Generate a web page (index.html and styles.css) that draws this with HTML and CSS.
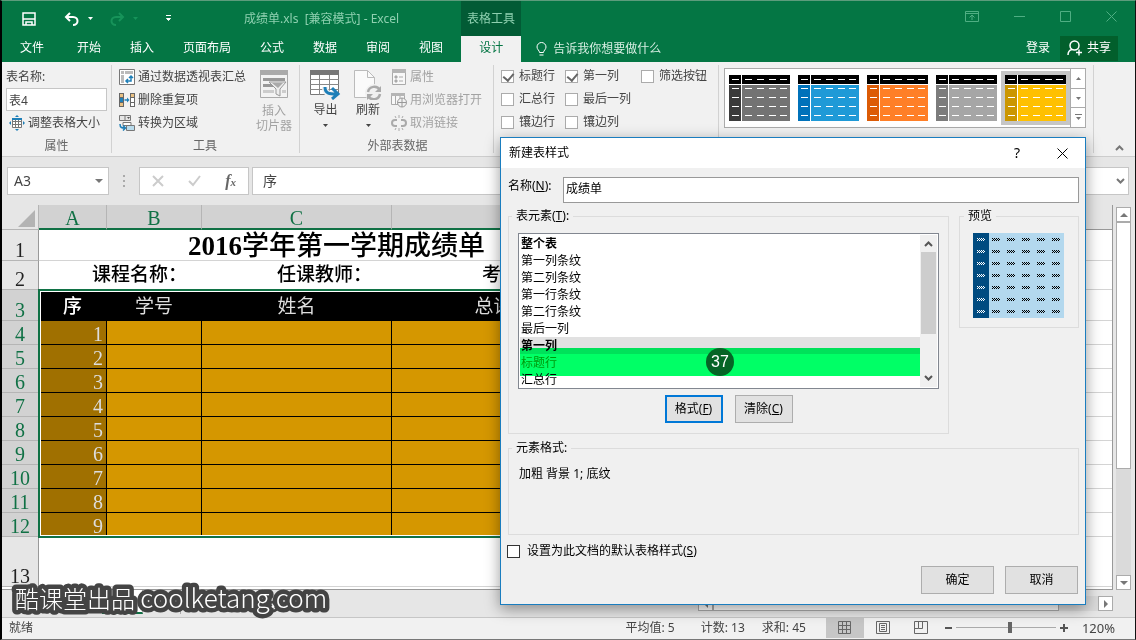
FILE: index.html
```html
<!DOCTYPE html>
<html lang="zh-CN">
<head>
	<meta charset="UTF-8">
	<meta name="viewport" content="width=device-width, initial-scale=1.0">
	<title>成绩单.xls [兼容模式] - Excel</title>
	<link rel="stylesheet" href="styles.css">
</head>

<body>
	<!-- shared shapes -->
	<svg class="defs" width="0" height="0" aria-hidden="true">
		<symbol id="swatch" viewBox="0 0 61 46">
			<rect width="61" height="46" fill="#fff"/>
			<rect width="12" height="9"/>
			<rect x="13" width="48" height="9"/>
			<rect class="side" y="10" width="12" height="36"/>
			<rect x="13" y="10" width="48" height="36" fill="currentColor"/>
			<path d="M3 4.500h7M16 4.500h7M28 4.500h7M40 4.500h7M51 4.500h7M3 13.500h7M16 13.500h7M28 13.500h7M40 13.500h7M51 13.500h7M3 22.500h7M16 22.500h7M28 22.500h7M40 22.500h7M51 22.500h7M3 31.500h7M16 31.500h7M28 31.500h7M40 31.500h7M51 31.500h7M3 40.500h7M16 40.500h7M28 40.500h7M40 40.500h7M51 40.500h7" stroke="#fff"/>
		</symbol>
		<symbol id="down" viewBox="0 0 5 3"><path d="M0 0h5L2.500 3z" fill="currentColor"/></symbol>
		<symbol id="chevron" viewBox="0 0 9 6"><path d="M1 5l3.500-3.500L8 5" fill="none" stroke="currentColor" stroke-width="2"/></symbol>
	</svg>

	<header class="titlebar">
		<div class="quick">
			<button class="plain" aria-label="保存"><svg width="14" height="14"><path d="M1 1h12v12H1zM1 7h12M4 13v-3h6v3" fill="none" stroke="#fff" stroke-width="1.500"/></svg></button>
			<button class="plain undo" aria-label="撤消"><svg width="16" height="14"><path d="M6 1L2 5l4 4M2 5h7c6 0 6 8 0 8" fill="none" stroke="#fff" stroke-width="2"/></svg></button>
			<svg class="arrow" width="5" height="3"><use href="#down"/></svg>
			<button class="plain redo" aria-label="恢复"><svg width="16" height="14"><path d="M10 1l4 4-4 4M14 5H7c-6 0-6 8 0 8" fill="none" stroke="#17935a" stroke-width="2"/></svg></button>
			<svg class="arrow dim" width="5" height="3"><use href="#down"/></svg>
			<svg class="customize" width="7" height="7"><path d="M1 .500h5M1.500 3.500h4L3.500 5.500z" stroke="#fff" fill="#fff"/></svg>
			<span class="doc">成绩单.xls&nbsp; [兼容模式] - Excel</span>
		</div>
		<div class="context">表格工具</div>
		<div class="window-buttons">
			<button class="plain" aria-label="功能区显示选项"><svg width="14" height="11"><path d="M.500.500h13v10H.500zM.500 2.500h13M7 9V4.500M4.500 6.500L7 4l2.500 2.500" fill="none" stroke="#4fae83"/></svg></button>
			<button class="plain" aria-label="最小化"><svg width="11" height="11"><path d="M0 5.500h11" stroke="#4fae83"/></svg></button>
			<button class="plain" aria-label="最大化"><svg width="11" height="11"><path d="M.500.500h10v10H.500z" fill="none" stroke="#4fae83"/></svg></button>
			<button class="plain" aria-label="关闭"><svg width="11" height="11"><path d="M.500.500l10 10M10.500.500l-10 10" stroke="#4fae83"/></svg></button>
		</div>
	</header>

	<nav class="tabs">
		<a class="file" href="#">文件</a>
		<a href="#">开始</a>
		<a href="#">插入</a>
		<a href="#">页面布局</a>
		<a href="#">公式</a>
		<a href="#">数据</a>
		<a href="#">审阅</a>
		<a href="#">视图</a>
		<a class="active" href="#">设计</a>
		<a class="tell" href="#"><svg width="11" height="14"><path d="M3.500 10.500c0-2-2.500-3-2.500-5.500a4.500 4.500 0 0 1 9 0c0 2.500-2.500 3.500-2.500 5.500zM3.500 13h4" fill="none" stroke="#fff"/></svg>告诉我你想要做什么</a>
		<a class="login" href="#">登录</a>
		<button class="share"><svg width="16" height="16"><circle cx="7.500" cy="5.500" r="4.500" fill="none" stroke="#fff" stroke-width="1.500"/><path d="M1 15c0-3 2-5 4-5.500M9 12.500h6M12 9.500v6" fill="none" stroke="#fff" stroke-width="1.500"/></svg>共享</button>
	</nav>

	<section class="ribbon">
		<div class="group props">
			<label class="row" for="tname">表名称:</label>
			<div class="row"><input id="tname" class="tname" value="表4"></div>
			<button class="row cmd"><svg width="16" height="16"><path d="M3.500 3.500h9v9h-9zM3.500 6.500h9M3.500 9.500h9M6.500 3.500v9M9.500 3.500v9" fill="#fff" stroke="#777"/><path d="M3 3h10v2H3zM8 0l2 2H6zM8 16l2-2H6zM0 8l2-2v4zM16 8l-2-2v4z" fill="#1e7fb8"/></svg>调整表格大小</button>
			<h2>属性</h2>
		</div>

		<div class="group tools">
			<div class="cols">
				<div>
					<button class="row cmd"><svg width="16" height="16"><path d="M.500.500h15v15H.500z" fill="#fff" stroke="#777"/><path d="M2 2h3v3H2zM6 2h8v3H6zM2 6h3v8H2z" fill="#bbb"/><path d="M7 12h5V7M9 10l-2 2 2 2M10 9l2-2 2 2" fill="none" stroke="#1e7fb8" stroke-width="1.500"/></svg>通过数据透视表汇总</button>
					<button class="row cmd"><svg width="16" height="14"><path d="M0 0h5v14H0zM11 0h5v14h-5z" fill="#666"/><path d="M1 1h3v3H1zM1 10h3v3H1zM12 1h3v3h-3z" fill="#e8c083"/><path d="M1 5h3v4H1z" fill="#1e7fb8"/><path d="M12 5h3v4h-3zM12 10h3v3h-3z" fill="#fff"/><path d="M5.500 7H9" stroke="#1e7fb8" stroke-width="1.500"/><path d="M8 4.500L10.500 7 8 9.500z" fill="#1e7fb8"/></svg>删除重复项</button>
					<button class="row cmd"><svg width="16" height="16"><path d="M.500.500h11v5H.500zM6 .500v5" fill="#e5e5e5" stroke="#777"/><path d="M8 2h3L9.500 4z" fill="#555"/><path d="M7.500 10.500h8v5h-8z" fill="#b9dced" stroke="#777"/><path d="M4 7.500h8v3H4z" fill="#fff" stroke="#777"/><path d="M1 9c0 4 2 4 5 4M4 10.500L6.500 13 4 15.500" fill="none" stroke="#1e7fb8" stroke-width="1.500"/></svg>转换为区域</button>
				</div>
				<button class="big off"><svg width="28" height="28"><path d="M.500.500h27v27H.500z" fill="#f3f3f3" stroke="#aaa"/><path d="M0 0h28v5H0z" fill="#aaa"/><path d="M3 8h22v3H3zM3 14h11v3H3z" fill="#999"/><path d="M3 20h11v3H3zM22 20h4v3h-4z" fill="#ccc"/><path d="M9 12h17l-6 7v7l-4-2v-5z" fill="#eee" stroke="#999"/><path d="M12 13h11l-5 5z" fill="#aaa"/></svg><span>插入<br>切片器</span></button>
			</div>
			<h2>工具</h2>
		</div>

		<div class="group external">
			<div class="cols">
				<button class="big"><svg width="31" height="30"><path d="M.500.500h28v24H.500z" fill="#fff" stroke="#777"/><path d="M0 0h29v5H0z" fill="#777"/><path d="M0 9.500h29M0 14.500h29M0 19.500h29M9.500 5v20M19.500 5v20" stroke="#888"/><path d="M15 17c0 7 4 7 10 7" fill="none" stroke="#f1f1f1" stroke-width="6"/><path d="M15 17c0 7 5 7 11 7M22 18l6 6-6 5" fill="none" stroke="#1e7fb8" stroke-width="3"/></svg><span>导出</span><svg width="5" height="3"><use href="#down"/></svg></button>
				<button class="big refresh"><svg width="28" height="30"><path d="M.500.500h13l7 7v20H.500z" fill="#fafafa" stroke="#bbb"/><path d="M13.500.500v7h7" fill="none" stroke="#bbb"/><circle cx="20" cy="23" r="9" fill="#f1f1f1"/><path d="M14 22c1-6 9-7 12-2M26 24c-1 6-9 7-12 2" fill="none" stroke="#aaa" stroke-width="2.500"/><path d="M27 16v6h-6zM13 30v-6h6z" fill="#aaa"/></svg><span>刷新</span><svg width="5" height="3"><use href="#down"/></svg></button>
				<div>
					<button class="row cmd off"><svg width="16" height="16"><path d="M1.500 1.500h13v14h-13z" fill="#f8f8f8" stroke="#aaa"/><path d="M1 0h14v4H1z" fill="#b5b5b5"/><path d="M4 7h2v2H4zM4 11h2v2H4zM8 8h4M8 12h4" fill="#aaa" stroke="#aaa"/></svg>属性</button>
					<button class="row cmd off"><svg width="16" height="16"><path d="M.500 1.500h13v11H.500zM4.500 4v8M9 4v3" fill="#f8f8f8" stroke="#aaa"/><path d="M0 1h14v3H0z" fill="#b5b5b5"/><circle cx="11" cy="10.500" r="4.500" fill="#f1f1f1" stroke="#999"/><path d="M6.500 10.500h9M11 6v9" stroke="#999"/></svg>用浏览器打开</button>
					<button class="row cmd off"><svg width="16" height="16"><path d="M6 5H4a3 3 0 0 0 0 6h2M10 5h2a3 3 0 0 1 0 6h-2" fill="none" stroke="#aaa" stroke-width="2"/><path d="M8 0v3M4 1l1 2M12 1l-1 2M8 16v-3M4 15l1-2M12 15l-1-2" stroke="#aaa"/></svg>取消链接</button>
				</div>
			</div>
			<h2>外部表数据</h2>
		</div>

		<div class="group options">
			<label><input type="checkbox" checked>标题行</label>
			<label><input type="checkbox" checked>第一列</label>
			<label><input type="checkbox">筛选按钮</label>
			<label><input type="checkbox">汇总行</label>
			<label class="wide"><input type="checkbox">最后一列</label>
			<label><input type="checkbox">镶边行</label>
			<label class="wide"><input type="checkbox">镶边列</label>
		</div>

		<div class="group styles">
			<div class="gallery">
				<button class="tile grey" aria-label="深灰"><svg width="61" height="46"><use href="#swatch"/></svg></button>
				<button class="tile blue" aria-label="蓝色"><svg width="61" height="46"><use href="#swatch"/></svg></button>
				<button class="tile orange" aria-label="橙色"><svg width="61" height="46"><use href="#swatch"/></svg></button>
				<button class="tile silver" aria-label="浅灰"><svg width="61" height="46"><use href="#swatch"/></svg></button>
				<button class="tile gold chosen" aria-label="金色"><svg width="61" height="46"><use href="#swatch"/></svg></button>
				<div class="gallery-scroll">
					<button aria-label="上一行"><svg class="flip" width="5" height="3"><use href="#down"/></svg></button>
					<button aria-label="下一行"><svg width="5" height="3"><use href="#down"/></svg></button>
					<button aria-label="其他"><svg width="7" height="7"><path d="M0 .500h7" stroke="#777"/><path d="M1 3h5L3.500 6z" fill="#777"/></svg></button>
				</div>
			</div>
		</div>
		<button class="collapse" aria-label="折叠功能区"><svg width="9" height="6"><use href="#chevron"/></svg></button>
	</section>

	<section class="formula">
		<div class="namebox"><span>A3</span><svg width="8" height="4" viewBox="0 0 5 3" preserveAspectRatio="none"><path d="M0 0h5L2.500 3z" fill="#777"/></svg></div>
		<svg class="grip" width="2" height="12"><path d="M0 1h2M0 6h2M0 11h2" stroke="#aaa" stroke-width="2"/></svg>
		<div class="fx">
			<svg width="12" height="12"><path d="M1 1l10 10M11 1L1 11" stroke="#ccc" stroke-width="2"/></svg>
			<svg width="13" height="12"><path d="M1 6l4 4 7-9" fill="none" stroke="#ccc" stroke-width="2"/></svg>
			<i>f<small>x</small></i>
		</div>
		<div class="bar"><input aria-label="编辑栏" value="序"><svg class="flip" width="9" height="6"><use href="#chevron"/></svg></div>
	</section>

	<main class="book">
		<div class="sheet">
			<table>
				<colgroup><col class="c-head"><col class="c-a"><col class="c-b"><col class="c-c"><col class="c-d"><col></colgroup>
				<thead>
					<tr><th class="corner"><svg width="17" height="17"><path d="M17 0v17H0z" fill="#b3b3b3"/></svg></th><th>A</th><th>B</th><th>C</th><th>D</th><th class="rest"></th></tr>
				</thead>
				<tbody>
					<tr class="r1"><th>1</th><td colspan="4" class="heading"><b>2016</b>学年第一学期成绩单</td><td></td></tr>
					<tr class="r2"><th>2</th><td colspan="4"><div class="info"><span>课程名称：</span><span>任课教师：</span><span>考试时间：</span></div></td><td></td></tr>
					<tr class="r3 sel"><th>3</th><td class="first">序</td><td>学号</td><td>姓名</td><td>总评成绩</td><td class="out"></td></tr>
					<tr class="sel"><th>4</th><td>1</td><td></td><td></td><td></td><td class="out"></td></tr>
					<tr class="sel"><th>5</th><td>2</td><td></td><td></td><td></td><td class="out"></td></tr>
					<tr class="sel"><th>6</th><td>3</td><td></td><td></td><td></td><td class="out"></td></tr>
					<tr class="sel"><th>7</th><td>4</td><td></td><td></td><td></td><td class="out"></td></tr>
					<tr class="sel"><th>8</th><td>5</td><td></td><td></td><td></td><td class="out"></td></tr>
					<tr class="sel"><th>9</th><td>6</td><td></td><td></td><td></td><td class="out"></td></tr>
					<tr class="sel"><th>10</th><td>7</td><td></td><td></td><td></td><td class="out"></td></tr>
					<tr class="sel"><th>11</th><td>8</td><td></td><td></td><td></td><td class="out"></td></tr>
					<tr class="sel"><th>12</th><td>9</td><td></td><td></td><td></td><td class="out"></td></tr>
					<tr class="r13"><th>13</th><td colspan="4"></td><td></td></tr>
				</tbody>
			</table>
			<div class="selection"></div>
		</div>
		<div class="vscroll">
			<button aria-label="向上"><svg class="flip" width="8" height="4" viewBox="0 0 5 3" preserveAspectRatio="none"><path d="M0 0h5L2.500 3z" fill="#777"/></svg></button>
			<div class="thumb"></div>
			<button aria-label="向下"><svg width="8" height="4" viewBox="0 0 5 3" preserveAspectRatio="none"><path d="M0 0h5L2.500 3z" fill="#777"/></svg></button>
		</div>
	</main>

	<div class="sheets">
		<a class="current" href="#">1#</a>
		<a href="#">2#</a>
		<div class="hscroll">
			<button aria-label="向左"><svg width="4" height="8"><path d="M4 0v8L0 4z" fill="#777"/></svg></button>
			<div class="thumb"></div>
			<button class="right" aria-label="向右"><svg width="4" height="8"><path d="M0 0v8l4-4z" fill="#777"/></svg></button>
		</div>
	</div>

	<footer class="status">
		<span class="ready">就绪</span>
		<span class="average">平均值: 5</span>
		<span class="count">计数: 13</span>
		<span>求和: 45</span>
		<div class="views">
			<button class="on" aria-label="普通"><svg width="13" height="13"><path d="M.500.500h12v12H.500zM.500 4.500h12M.500 8.500h12M4.500.500v12M8.500.500v12" fill="none" stroke="#666"/></svg></button>
			<button aria-label="页面布局"><svg width="14" height="13"><path d="M.500.500h13v12H.500zM3.500 2.500h7v8h-7zM5 4.500h4M5 6.500h4M5 8.500h4" fill="none" stroke="#666"/></svg></button>
			<button aria-label="分页预览"><svg width="14" height="13"><path d="M.500.500h13v12H.500zM4.500.500v7h-4M8.500.500v7h-4" fill="none" stroke="#666"/></svg></button>
		</div>
		<div class="zoom">
			<button class="plain" aria-label="缩小"><svg width="7" height="8"><path d="M0 4h7" stroke="#555" stroke-width="2"/></svg></button>
			<input type="range" min="0" max="100" value="54" aria-label="显示比例">
			<button class="plain" aria-label="放大"><svg width="8" height="8"><path d="M0 4h8M4 0v8" stroke="#555" stroke-width="2"/></svg></button>
			<span>120%</span>
		</div>
	</footer>

	<div class="dialog" role="dialog" aria-labelledby="dlg-title">
		<div class="dialog-title">
			<span id="dlg-title">新建表样式</span>
			<button class="plain help" aria-label="帮助">?</button>
			<button class="plain" aria-label="关闭"><svg width="11" height="11"><path d="M.500.500l10 10M10.500.500l-10 10" stroke="#000"/></svg></button>
		</div>
		<form class="dialog-body">
			<div class="name-row">
				<label for="style-name">名称(<u>N</u>):</label>
				<input id="style-name" value="成绩单">
			</div>
			<div class="panels">
				<fieldset class="elements">
					<legend>表元素(<u>T</u>):</legend>
					<div class="listbox">
						<ul role="listbox">
							<li class="set">整个表</li>
							<li>第一列条纹</li>
							<li>第二列条纹</li>
							<li>第一行条纹</li>
							<li>第二行条纹</li>
							<li>最后一列</li>
							<li class="set picked">第一列</li>
							<li class="target">标题行</li>
							<li>汇总行</li>
						</ul>
						<div class="list-scroll">
							<svg width="9" height="6"><use href="#chevron"/></svg>
							<div class="thumb"></div>
							<svg class="flip" width="9" height="6"><use href="#chevron"/></svg>
						</div>
						<div class="highlight"></div>
						<div class="counter">37</div>
					</div>
					<div class="actions">
						<button type="button" class="btn focus">格式(<u>F</u>)</button>
						<button type="button" class="btn">清除(<u>C</u>)</button>
					</div>
				</fieldset>
				<fieldset class="preview">
					<legend>预览</legend>
					<svg width="91" height="85">
						<defs>
							<!-- one row of cells, each cell a small hatched dash -->
							<g id="dash" stroke-dasharray="1 1">
								<path d="M0 .500h8M1 1.500h8M0 2.500h8"/>
							</g>
							<g id="cells">
								<use href="#dash" x="4" y="5" stroke="#fff"/>
								<g stroke="#000">
									<use href="#dash" x="19" y="5"/>
									<use href="#dash" x="34" y="5"/>
									<use href="#dash" x="49" y="5"/>
									<use href="#dash" x="64" y="5"/>
									<use href="#dash" x="79" y="5"/>
								</g>
							</g>
						</defs>
						<rect width="16" height="85" fill="#004b80"/>
						<rect x="16" width="75" height="85" fill="#b3d8ee"/>
						<use href="#cells"/>
						<use href="#cells" y="12"/>
						<use href="#cells" y="24"/>
						<use href="#cells" y="36"/>
						<use href="#cells" y="48"/>
						<use href="#cells" y="60"/>
						<use href="#cells" y="72"/>
					</svg>
				</fieldset>
			</div>
			<fieldset class="format">
				<legend>元素格式:</legend>
				<p>加粗 背景 1; 底纹</p>
			</fieldset>
			<label class="default"><input type="checkbox"><span>设置为此文档的默认表格样式(<u>S</u>)</span></label>
			<div class="confirm">
				<button type="button" class="btn">确定</button>
				<button type="button" class="btn">取消</button>
			</div>
		</form>
	</div>

	<svg class="watermark" width="350" height="50">
		<text x="13" y="32">酷课堂出品 <tspan class="site">coolketang.com</tspan></text>
	</svg>
</body>
</html>
```
FILE: styles.css
```css
* {
  box-sizing: border-box;
}

body {
  position: relative;
  display: flex;
  flex-direction: column;
  min-height: 100vh;
  margin: 0;
  border: 1px solid #5c9c7c;
  border-left: 2px solid #000;
  border-right-color: #111;
  border-bottom-color: #777;
  background-color: #e6e6e6;
  color: #444;
  font: 12px/16px "Noto Sans", "Noto Sans CJK SC", sans-serif;
  overflow: hidden;
}

button,
input {
  font: inherit;
  color: inherit;
}

button {
  display: flex;
  align-items: center;
  justify-content: center;
  margin: 0;
  padding: 0;
  border: 0;
  background: none;
  white-space: nowrap;
}

svg {
  display: block;
  flex: none;
}

a {
  color: inherit;
  text-decoration: none;
}

.defs {
  position: absolute;
}

.flip {
  transform: scaleY(-1);
}

/* title bar */

.titlebar {
  display: flex;
  height: 35px;
  background-color: #047644;
  color: #8fd0b0;
}

.quick {
  display: flex;
  align-items: center;
  width: 459px;
  padding-left: 20px;
  color: #fff;
}

.undo {
  margin-left: 28px;
}

.arrow {
  margin-left: 8px;
}

.redo {
  margin-left: 16px;
}

.dim {
  color: #17935a;
}

.customize {
  margin-left: 27px;
}

.doc {
  margin-left: 72px;
  color: #8fd0b0;
  white-space: nowrap;
}

.context {
  width: 60px;
  line-height: 35px;
  background-color: #025b35;
  text-align: center;
}

.window-buttons {
  display: flex;
  gap: 35px;
  align-items: center;
  margin-left: auto;
  padding: 0 18px 4px 0;
}

/* ribbon tabs */

.tabs {
  display: flex;
  gap: 1px;
  height: 26px;
  background-color: #047644;
  color: #fff;
  line-height: 24px;
}

.tabs a {
  padding: 0 14px;
  white-space: nowrap;
}

.tabs .file {
  padding: 0 18px;
}

.tabs .active {
  margin-left: 3px;
  padding: 0 18px;
  background-color: #f1f1f1;
  color: #047644;
}

.tabs .tell {
  display: flex;
  align-items: center;
  gap: 6px;
  color: #d5ede1;
}

.tabs .login {
  margin-left: auto;
  padding: 0 9px;
}

.share {
  gap: 4px;
  width: 58px;
  height: 25px;
  margin-right: 17px;
  padding-bottom: 2px;
  background-color: #025f2c;
}

/* ribbon */

.ribbon {
  display: flex;
  height: 95px;
  padding-top: 3px;
  border-bottom: 1px solid #cdcdcd;
  background-color: #f1f1f1;
}

.group {
  position: relative;
  height: 88px;
  border-right: 1px solid #d2d2d2;
}

.group h2 {
  margin: 0;
  font-size: 12px;
  font-weight: normal;
  line-height: 24px;
  text-align: center;
  color: #666;
}

.row {
  display: flex;
  align-items: center;
  height: 23px;
}

.cmd {
  justify-content: flex-start;
  gap: 3px;
}

.off {
  color: #a3a3a3;
}

.cols {
  display: flex;
}

.props {
  width: 110px;
  padding: 0 4px;
}

.props .cmd {
  padding-left: 3px;
}

.tname {
  width: 101px;
  height: 23px;
  padding: 0 2px;
  border: 1px solid #c6c6c6;
  background-color: #fff;
}

.tools {
  width: 188px;
  padding-left: 7px;
}

.tools h2,
.external h2 {
  padding-right: 8px;
}

.big {
  flex-direction: column;
  justify-content: flex-start;
  gap: 5px;
  height: 69px;
  padding-top: 5px;
  line-height: 15px;
}

.tools .big {
  margin-left: 10px;
}

.external {
  width: 194px;
  padding-left: 10px;
}

.external .big {
  gap: 2px;
}

.external .big span {
  margin-bottom: 5px;
}

.refresh {
  margin-left: 13px;
}

.external .cols > div {
  margin-left: 9px;
}

.options {
  display: grid;
  grid-template-columns: 64px 76px 1fr;
  grid-template-rows: repeat(3, 23px);
  width: 225px;
  padding-left: 7px;
}

.options label {
  display: flex;
  align-items: center;
  gap: 5px;
  padding-bottom: 1px;
  white-space: nowrap;
}

.options .wide {
  grid-column: 2 / 4;
}

input[type="checkbox"] {
  flex: none;
  appearance: none;
  width: 13px;
  height: 13px;
  margin: 0;
  border: 1px solid #ababab;
  background-color: #fff;
}

input[type="checkbox"]:checked::after {
  content: "";
  display: block;
  width: 5px;
  height: 8px;
  margin: 0 0 0 3px;
  border: solid #666;
  border-width: 0 2px 2px 0;
  transform: rotate(40deg);
}

.styles {
  width: 375px;
  padding: 3px 0 0 5px;
}

.gallery {
  display: flex;
  width: 362px;
  height: 60px;
  border: 1px solid #ababab;
  background-color: #fff;
}

.tile {
  width: 69px;
  height: 54px;
  margin-top: 2px;
}

.side {
  fill: var(--side);
}

.chosen {
  background-color: #c6c6c6;
}

.grey { color: #737373; --side: #3b3b3b; }
.blue { color: #1f9ad7; --side: #0072ba; }
.orange { color: #ff7f27; --side: #dc5b06; }
.silver { color: #a6a6a6; --side: #7c7c7c; }
.gold { color: #ffc000; --side: #cb9600; }

.gallery-scroll {
  display: flex;
  flex: 1;
  flex-direction: column;
  border-left: 1px solid #ababab;
  color: #777;
}

.gallery-scroll button {
  flex: 1;
}

.gallery-scroll button + button {
  border-top: 1px solid #ababab;
}

.collapse {
  align-self: flex-end;
  margin: 0 11px 5px auto;
  color: #777;
}

/* formula bar */

.formula {
  display: flex;
  align-items: center;
  height: 48px;
  padding: 0 6px 0 5px;
}

.namebox,
.fx,
.bar {
  display: flex;
  align-items: center;
  height: 28px;
  border: 1px solid #c6c6c6;
  background-color: #fff;
}

.namebox {
  justify-content: space-between;
  width: 102px;
  padding: 0 5px 0 6px;
  font-size: 14px;
}

.grip {
  margin: 0 14px;
}

.fx {
  justify-content: space-between;
  width: 110px;
  padding: 0 12px;
}

.fx i {
  color: #666;
  font: bold italic 16px/20px "Liberation Serif", serif;
}

.fx small {
  font-size: 11px;
}

.bar {
  flex: 1;
  margin-left: 3px;
  padding-right: 3px;
  color: #777;
}

.bar input {
  flex: 1;
  min-width: 0;
  padding: 0 10px;
  border: 0;
  background: none;
  color: #444;
  font-size: 14px;
}

/* worksheet */

.book {
  display: flex;
  gap: 3px;
  flex: 1;
  padding-right: 4px;
}

.sheet {
  position: relative;
  flex: 1;
  min-width: 0;
  border-right: 1px solid #999;
  border-bottom: 1px solid #999;
  background-color: #fff;
}

.sheet table {
  width: 100%;
  table-layout: fixed;
  border-collapse: separate;
  border-spacing: 0;
  font: 20px/20px "Liberation Serif", "Noto Sans CJK SC", serif;
}

.c-head { width: 37px; }
.c-a { width: 68px; }
.c-b { width: 95px; }
.c-c { width: 190px; }
.c-d { width: 242px; }

.sheet th,
.sheet td {
  padding: 0;
  overflow: hidden;
  border-bottom: 1px solid #d4d4d4;
  white-space: nowrap;
}

.sheet thead th {
  height: 25px;
  padding-top: 2px;
  border-right: 1px solid #b5b5b5;
  border-bottom: 2px solid #107145;
  background-color: #d2d2d2;
  color: #107145;
  font-weight: normal;
}

.sheet thead .corner {
  padding: 0;
  border-bottom: 1px solid #b5b5b5;
  background-color: #e6e6e6;
}

.corner svg {
  margin: 3px 0 0 16px;
}

.sheet thead .rest {
  border-right: 0;
  border-bottom: 1px solid #999;
  background-color: #e6e6e6;
}

tbody tr {
  height: 24px;
}

.sheet tbody th {
  padding-top: 2px;
  border-right: 1px solid #999;
  border-bottom-color: #b5b5b5;
  background-color: #e6e6e6;
  color: #222;
  font-weight: normal;
  vertical-align: bottom;
}

.r1 { height: 31px; }
.r2 { height: 29px; }
.r3 { height: 31px; }
.r13 { height: 50px; }

.sheet .heading {
  padding-top: 2px;
  color: #000;
  font-size: 27px;
  font-weight: 500;
  line-height: 28px;
  text-align: center;
}

.info {
  display: grid;
  grid-template-columns: 185px 205px 1fr;
  padding-left: 53px;
  color: #000;
  font-size: 19px;
  font-weight: 500;
}

.sheet tbody .sel th,
.sheet .sel th {
  background-color: #d2d2d2;
  color: #107145;
}

.sheet .sel td {
  padding-top: 2px;
  border-right: 1px solid #000;
  border-bottom-color: #000;
  background-color: #d59700;
  color: #ddd;
}

.sheet .sel td:nth-child(2) {
  padding-right: 3px;
  background-color: #a07000;
  text-align: right;
}

.sheet .r3 td,
.sheet .r3 td:nth-child(2) {
  padding: 4px 0 0;
  border-color: #000;
  background-color: #000;
  font-size: 19px;
  text-align: center;
}

.sheet .r3 .first {
  color: #fff;
  font-weight: 500;
}

.sheet .sel .out,
.sheet .r3 .out {
  border-right: 0;
  border-bottom-color: #d4d4d4;
  background-color: #fff;
}

.selection {
  position: absolute;
  left: 36px;
  top: 84px;
  width: 597px;
  height: 249px;
  border: 2px solid #107145;
  box-shadow: inset 0 0 0 1px #fff;
}

.vscroll {
  display: flex;
  flex-direction: column;
  width: 15px;
  margin-top: 2px;
  background-color: #dadada;
}

.vscroll button,
.hscroll button {
  flex: none;
  width: 15px;
  height: 15px;
  border: 1px solid #ababab;
  background-color: #fff;
}

.vscroll .thumb {
  flex: 0 0 247px;
  border: 1px solid #ababab;
  background-color: #fff;
}

.vscroll button:last-child {
  margin-top: auto;
}

/* sheet tabs and horizontal scroll bar */

.sheets {
  display: flex;
  height: 27px;
  padding-left: 100px;
}

.sheets a {
  width: 38px;
  height: 24px;
  border-right: 1px solid #ababab;
  line-height: 22px;
  text-align: center;
}

.sheets .current {
  width: 41px;
  border-bottom: 2px solid #107145;
  background-color: #fff;
  color: #107145;
}

.hscroll {
  display: flex;
  width: 415px;
  height: 15px;
  margin: 6px 22px 0 auto;
  background-color: #dadada;
}

.hscroll .thumb {
  flex: 0 1 346px;
  border: 1px solid #ababab;
  background-color: #fff;
}

.hscroll .right {
  margin-left: auto;
}

/* status bar */

.status {
  display: flex;
  align-items: center;
  height: 22px;
  padding: 0 0 2px 7px;
  border-top: 1px solid #c6c6c6;
  background-color: #f1f1f1;
  line-height: 18px;
  white-space: nowrap;
}

.average {
  margin-left: auto;
}

.count {
  margin: 0 17px 0 26px;
}

.views {
  display: flex;
  margin-left: 20px;
}

.views button {
  width: 38px;
  height: 21px;
}

.views .on {
  background-color: #c6c6c6;
}

.zoom {
  display: flex;
  align-items: center;
  margin-left: 5px;
  padding-right: 20px;
}

.zoom input {
  appearance: none;
  width: 100px;
  height: 11px;
  margin: 0 4px;
  background: linear-gradient(#aaa, #aaa) center / 100% 1px no-repeat;
}

.zoom input::-webkit-slider-thumb {
  appearance: none;
  width: 4px;
  height: 11px;
  background-color: #666;
}

.zoom span {
  margin-left: 14px;
  font-size: 13px;
}

/* dialog */

.dialog {
  position: absolute;
  left: 498px;
  top: 136px;
  width: 586px;
  border: 1px solid #1a7dbf;
  background-color: #f0f0f0;
  box-shadow: 0 4px 14px rgba(0, 0, 0, 0.4);
  color: #000;
}

.dialog-title {
  display: flex;
  align-items: center;
  height: 30px;
  padding: 0 17px 0 8px;
  background-color: #fff;
}

.dialog-title .help {
  margin: 0 37px 0 auto;
  font-size: 14px;
}

.dialog-body {
  padding: 9px 6px 10px 7px;
}

.name-row {
  display: flex;
  height: 26px;
}

.name-row label {
  width: 55px;
  line-height: 18px;
}

.name-row input {
  flex: 1;
  min-width: 0;
  padding: 0 2px 2px;
  border: 1px solid #999;
  background-color: #fff;
}

.panels {
  display: flex;
  align-items: flex-start;
  gap: 10px;
  margin-top: 5px;
}

fieldset {
  min-width: 0;
  margin: 0;
  padding: 0;
  border: 1px solid #dcdcdc;
}

legend {
  margin-left: 3px;
  padding: 0 4px;
}

.elements {
  flex: 1;
  height: 226px;
  padding: 9px 9px 0 9px;
}

.elements legend {
  margin-left: -6px;
}

.listbox {
  position: relative;
  display: flex;
  height: 156px;
  border: 1px solid #828790;
  background-color: #fff;
}

.listbox ul {
  flex: 1;
  margin: 0;
  padding: 1px 0 0 1px;
  list-style: none;
  line-height: 17px;
  overflow: hidden;
}

.listbox li {
  padding-left: 1px;
}

.set {
  font-weight: bold;
}

.picked {
  background-color: #e1e1e1;
}

.target {
  color: #1a9a1a;
}

.list-scroll {
  display: flex;
  flex-direction: column;
  align-items: center;
  width: 17px;
  margin: 1px 1px 1px 0;
  padding: 6px 0;
  background-color: #f0f0f0;
  color: #555;
}

.list-scroll .thumb {
  width: 15px;
  height: 82px;
  margin: 5px 0 auto;
  background-color: #cdcdcd;
}

/* countdown marker over the list */

.highlight {
  position: absolute;
  left: 1px;
  right: 18px;
  top: 114px;
  height: 28px;
  background-color: #00ff66;
  mix-blend-mode: multiply;
}

.counter {
  position: absolute;
  left: 187px;
  top: 114px;
  width: 28px;
  height: 28px;
  border-radius: 50%;
  background-color: #066426;
  color: #fff;
  font: 16px/28px "Liberation Sans", sans-serif;
  text-align: center;
}

.actions {
  display: flex;
  justify-content: center;
  gap: 12px;
  margin-top: 6px;
}

.btn {
  width: 58px;
  height: 28px;
  border: 1px solid #adadad;
  background-color: #e1e1e1;
}

.focus {
  border: 2px solid #0078d7;
}

.preview {
  width: 120px;
  height: 120px;
  padding: 9px 0 0 13px;
}

.preview legend {
  margin-left: -9px;
}

.format {
  height: 95px;
  margin-top: 6px;
}

.format p {
  margin: 10px 10px 0;
}

.default {
  display: flex;
  align-items: center;
  gap: 7px;
  margin: 8px 0 0 -1px;
}

.default input[type="checkbox"] {
  border-color: #333;
}

.confirm {
  display: flex;
  justify-content: flex-end;
  gap: 11px;
  margin-top: 7px;
  padding-right: 1px;
}

.confirm .btn {
  width: 73px;
}

.watermark {
  position: absolute;
  left: 0;
  bottom: 13px;
  fill: #fff;
  stroke: #444;
  stroke-width: 9px;
  stroke-linejoin: round;
  paint-order: stroke;
  font: 300 24px/36px "Noto Sans CJK SC", sans-serif;
}

.site {
  font-size: 26px;
}
```
